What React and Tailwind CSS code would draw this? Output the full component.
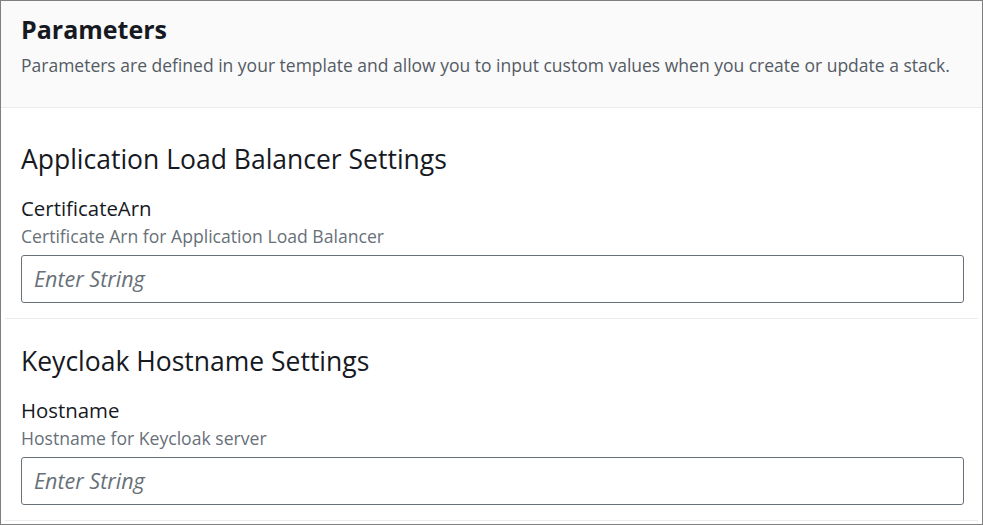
export default function App() {
  const font = { fontFamily: '"Open Sans", "Noto Sans", Arial, sans-serif' };
  const Section = ({ title, label, desc, first }) => (
    <div className={`mx-1 border-b border-[#eaeded] pl-4 pr-[14px] pb-[15px] ${first ? "pt-[33px]" : "pt-[24px]"}`}>
      <h3 className="text-[26.5px] leading-[36px] text-[#16191f] font-normal">{title}</h3>
      <div className="mt-[18px] text-[20.4px] leading-[26px] text-[#16191f]">{label}</div>
      <div className="mt-[4px] text-[17.6px] leading-[22px] text-[#687078]">{desc}</div>
      <div className="mt-[8px] h-[48px] border border-[#687078] rounded-[3px] flex items-center px-3">
        <span className="italic text-[21.5px] text-[#687078]">Enter String</span>
      </div>
    </div>
  );
  return (
    <div style={font} className="w-[983px] h-[525px] bg-white border border-[#7f7f7f] overflow-hidden">
      <div className="h-[107px] bg-[#fafafa] border-b border-[#eaeded] px-5 pt-[12px]">
        <h2 className="text-[25px] leading-[32px] font-bold text-[#16191f]">Parameters</h2>
        <p className="mt-[8px] text-[17.5px] leading-[24px] text-[#545b64] whitespace-nowrap">
          Parameters are defined in your template and allow you to input custom values when you create or update a stack.
        </p>
      </div>
      <Section
        first
        title="Application Load Balancer Settings"
        label="CertificateArn"
        desc="Certificate Arn for Application Load Balancer"
      />
      <Section
        title="Keycloak Hostname Settings"
        label="Hostname"
        desc="Hostname for Keycloak server"
      />
    </div>
  );
}
